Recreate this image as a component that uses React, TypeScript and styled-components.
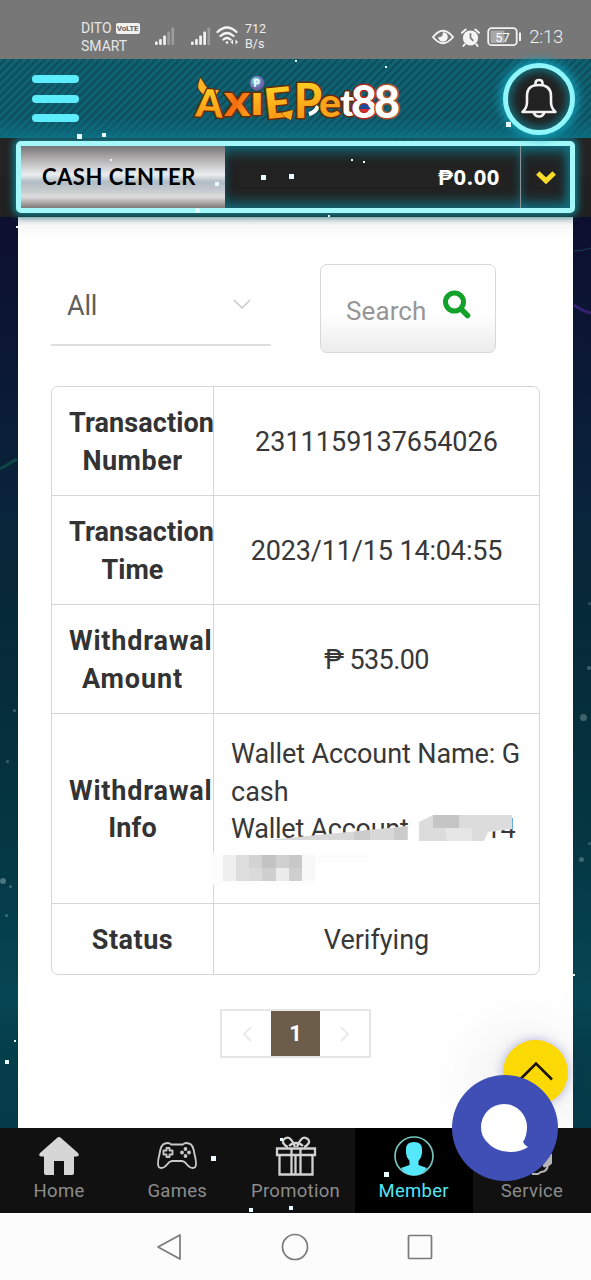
import React from "react";
import styled, { createGlobalStyle } from "styled-components";

const Global = createGlobalStyle`
  * { box-sizing: border-box; }
  body { margin: 0; font-family: Roboto, "Noto Sans", sans-serif; background: #fcfcfc; }
  button { font: inherit; margin: 0; padding: 0; border: 0; background: none; }
  svg { display: block; flex: none; }
`;

const Page = styled.main`
  position: relative;
  width: 591px;
  height: 1280px;
  overflow: hidden;
  display: flex;
  flex-direction: column;
`;

/* status bar */
const StatusBar = styled.div`
  height: 59px;
  flex: none;
  background: #777;
  color: #e6e6e6;
  display: flex;
  align-items: flex-start;
  padding: 19px 28px 0 81px;
`;
const Carriers = styled.div`
  width: 74px;
  font-size: 14px;
  line-height: 18px;
`;
const CarrierLine = styled.div<{ $spacing?: number }>`
  display: flex;
  align-items: center;
  gap: 4px;
  letter-spacing: ${(p) => p.$spacing ?? 0}px;
`;
const Volte = styled.span`
  background: #f2f2f2;
  color: #666;
  font-size: 8px;
  font-weight: 700;
  line-height: 11px;
  width: 24px;
  text-align: center;
  letter-spacing: -0.2px;
  border-radius: 2px;
`;
const StatusLeft = styled.div`
  display: flex;
  gap: 16px;
  padding-top: 8px;
  align-items: flex-start;
`;
const WifiWrap = styled.div`
  margin: -1px 0 0 -11px;
`;
const Speed = styled.div`
  font-size: 12.5px;
  line-height: 15px;
  margin: 2px auto 0 7px;
  color: #eee;
`;
const StatusIcons = styled.div`
  display: flex;
  align-items: center;
  height: 36px;
  gap: 7px;
`;
const Clock = styled.span`
  font-size: 18.5px;
  font-weight: 300;
  color: #f2f2f2;
  letter-spacing: -0.25px;
`;

/* header */
const Header = styled.header`
  height: 79px;
  flex: none;
  display: flex;
  align-items: center;
  justify-content: space-between;
  padding: 0 16px 0 32px;
  background:
    linear-gradient(to bottom, rgba(10, 110, 130, 0) 75%, rgba(10, 115, 135, 0.75) 100%),
    repeating-linear-gradient(135deg, #106171 0 2.6px, #0e4f5e 3.4px 5px, #106171 5.6px);
`;
const MenuButton = styled.button`
  width: 47px;
  display: flex;
  flex-direction: column;
  gap: 11.5px;
`;
const MenuBar = styled.span`
  height: 8px;
  border-radius: 4px;
  background: #5cecfb;
`;
const Brand = styled.div`
  margin-left: 12px;
`;
const Bell = styled.button`
  position: relative;
  z-index: 2;
  width: 72px;
  height: 72px;
  border-radius: 50%;
  border: 5px solid #8ff6fb;
  background: #222;
  box-shadow: 0 0 10px 3px #12a0b8, inset 0 0 8px 3px #14707e;
  display: flex;
  align-items: center;
  justify-content: center;
  padding-bottom: 2px;
`;

/* cash bar */
const CashStrip = styled.section`
  height: 79px;
  flex: none;
  background: linear-gradient(#242424 50%, #202020 50%);
  padding: 3px 16px 4px;
  position: relative;
  z-index: 1;
`;
const CashBox = styled.div`
  height: 72px;
  border: 5px solid #a4f8f9;
  border-radius: 5px;
  background: #222;
  display: flex;
  box-shadow: 0 0 7px 3px #127a8a;
`;
const CashLabel = styled.div`
  width: 204px;
  flex: none;
  display: flex;
  align-items: center;
  padding: 0 0 1px 21px;
  font: 700 22px Lato, sans-serif;
  letter-spacing: 0.5px;
  white-space: nowrap;
  color: #000;
  background: linear-gradient(#767678 0%, #aaa6a7 18%, #cfcfd1 34%, #eaedf1 46%, #b3bdc5 58%, #c2c8cc 70%, #dcdddd 82%, #b5b0b0 90%, #7d7978 100%);
`;
const CashAmount = styled.div`
  flex: 1;
  display: flex;
  align-items: center;
  justify-content: flex-end;
  padding: 0 20px 3px 0;
  color: #fff;
  font: 700 22px "Open Sans", sans-serif;
  letter-spacing: 0.6px;
  box-shadow: inset 0 10px 13px -5px #127080, inset 0 -10px 13px -5px #127080;
`;
const CashToggle = styled.button`
  width: 50px;
  border-left: 1px solid #8c9294;
  display: flex;
  align-items: center;
  justify-content: center;
  box-shadow: inset -6px 0 12px -3px #127080, inset 0 10px 13px -5px #127080, inset 0 -10px 13px -5px #127080;
`;

/* content */
const Backdrop = styled.section`
  height: 911px;
  flex: none;
  padding: 0 18px;
  background: linear-gradient(#0d0f30 0%, #0b1733 14%, #09243a 32%, #052c38 50%, #043844 70%, #064654 86%, #053f4c 90%, #053b48 100%);
`;
const Card = styled.div`
  height: 911px;
  background: linear-gradient(#d2d4d4 0, #f6f6f6 8px, #fff 20px);
  display: flex;
  flex-direction: column;
  padding: 47px 33px 0;
`;
const Filters = styled.div`
  display: flex;
  gap: 49px;
  height: 89px;
`;
const Select = styled.div`
  width: 220px;
  height: 82px;
  border-bottom: 2px solid #dedede;
  display: flex;
  align-items: center;
  justify-content: space-between;
  padding: 3px 20px 0 16px;
  font-size: 27px;
  letter-spacing: -0.2px;
  color: #606060;
  svg { margin-top: -3px; }
`;
const SearchButton = styled.button`
  width: 176px;
  height: 89px;
  border: 1.5px solid #d8d8d8;
  border-radius: 7px;
  background: linear-gradient(#fff 55%, #ececec);
  display: flex;
  align-items: center;
  padding: 4px 0 0 25px;
  gap: 17px;
  font-size: 26px;
  letter-spacing: 0.1px;
  color: #969696;
  svg { margin-top: -12px; }
`;
const Table = styled.dl`
  margin: 33px 0 0;
  width: 489px;
  border: 1px solid #d6d6d6;
  border-radius: 7px;
`;
const Row = styled.div<{ $h: number }>`
  display: flex;
  height: ${(p) => p.$h}px;
  & + & { border-top: 1px solid #d6d6d6; }
`;
const Term = styled.dt`
  width: 162px;
  flex: none;
  border-right: 1px solid #d6d6d6;
  display: flex;
  flex-direction: column;
  align-items: center;
  justify-content: center;
  padding: 3px 17px 0;
  font-size: 27px;
  font-weight: 700;
  line-height: 37.5px;
  color: #333;
`;
const Line = styled.span<{ $ls?: number; $wide?: boolean }>`
  white-space: nowrap;
  letter-spacing: ${(p) => p.$ls ?? 0}px;
  align-self: ${(p) => (p.$wide ? "flex-start" : "auto")};
`;
const Value = styled.dd<{ $info?: boolean }>`
  position: relative;
  margin: 0;
  flex: 1;
  display: flex;
  flex-direction: column;
  justify-content: ${(p) => (p.$info ? "flex-start" : "center")};
  align-items: ${(p) => (p.$info ? "flex-start" : "center")};
  padding: ${(p) => (p.$info ? "22px 0 0 17px" : "3px 0 0")};
  font-size: 27px;
  line-height: 37.5px;
  color: #383838;
`;
const Tail = styled.span`
  margin-left: 77px;
`;
const Redaction = styled.svg`
  position: absolute;
  left: -14px;
  top: 91px;
`;
const Pager = styled.nav`
  margin: 34px auto 0;
  width: 151px;
  height: 49px;
  border: 2px solid #e6e6e6;
  display: flex;
`;
const PageButton = styled.button<{ $current?: boolean }>`
  width: 49px;
  display: flex;
  align-items: center;
  justify-content: center;
  font-weight: 700;
  font-size: 22px;
  color: #fff;
  background: ${(p) => (p.$current ? "#6b5d49" : "transparent")};
`;

/* floating buttons */
const TopButton = styled.button`
  position: absolute;
  left: 503px;
  top: 1040px;
  width: 65px;
  height: 65px;
  border-radius: 50%;
  background: #fbd905;
  box-shadow: 0 0 9px 2px rgba(110, 110, 190, 0.35), -10px 10px 70px 10px rgba(0, 0, 0, 0.1);
  display: flex;
  justify-content: center;
  padding: 21px 0 0 1px;
`;
const ChatButton = styled.button`
  position: absolute;
  z-index: 3;
  left: 452px;
  top: 1075px;
  width: 106px;
  height: 106px;
  border-radius: 50%;
  background: #3f4fb5;
`;

/* bottom navigation */
const TabBar = styled.nav`
  position: relative;
  z-index: 1;
  height: 85px;
  flex: none;
  display: flex;
  background: #111;
`;
const Tab = styled.a<{ $active?: boolean }>`
  flex: 1;
  display: flex;
  flex-direction: column;
  align-items: center;
  padding-top: 7px;
  gap: 2px;
  font-size: 18.5px;
  letter-spacing: 0.3px;
  line-height: 24px;
  color: ${(p) => (p.$active ? "#54e6f5" : "#8c8c8c")};
  background: ${(p) => (p.$active ? "#000" : "transparent")};
`;
const SystemBar = styled.div`
  height: 67px;
  flex: none;
  background: #fcfcfc;
  display: flex;
  justify-content: center;
  align-items: center;
  gap: 98px;
  padding-right: 4px;
`;

const Sparkle = styled.i<{ $x: number; $y: number; $s: number; $o?: number }>`
  position: absolute;
  z-index: 2;
  left: ${(p) => p.$x}px;
  top: ${(p) => p.$y}px;
  width: ${(p) => p.$s}px;
  height: ${(p) => p.$s}px;
  background: #e8fcff;
  opacity: ${(p) => p.$o ?? 1};
  border-radius: ${(p) => (p.$o ? "50%" : "0")};
`;
const Streaks = styled.svg`
  position: absolute;
  left: 0;
  top: 217px;
  pointer-events: none;
`;

const Signal = ({ bars }: { bars: number }) => (
  <svg width="20" height="19" viewBox="0 0 20 19">
    {[0, 1, 2, 3, 4].map((i) => (
      <rect key={i} x={i * 4.1} y={[14.5, 12, 8.5, 4.5, 0.5][i]} width="2.7" height={[3.5, 6, 9.5, 13.5, 17.5][i]} rx="1" fill="#f2f2f2" opacity={i < bars ? 1 : 0.3} />
    ))}
  </svg>
);

const Logo = () => (
  <svg width="212" height="60" viewBox="190 68 212 60">
    <defs>
      <linearGradient id="gold" x1="0" y1="0" x2="0" y2="1">
        <stop offset="0" stopColor="#ffe22b" />
        <stop offset=".6" stopColor="#fba91a" />
        <stop offset="1" stopColor="#f58a12" />
      </linearGradient>
      <linearGradient id="fire" x1="0" y1="0" x2="1" y2="1">
        <stop offset="0" stopColor="#ffae20" />
        <stop offset=".5" stopColor="#f66c12" />
        <stop offset="1" stopColor="#ffb420" />
      </linearGradient>
      <radialGradient id="orb" cx=".4" cy=".35">
        <stop offset="0" stopColor="#c3f5f5" />
        <stop offset=".6" stopColor="#61a8cc" />
        <stop offset="1" stopColor="#7462a8" />
      </radialGradient>
    </defs>
    <g fontFamily="Lato, sans-serif" fontWeight="900" stroke="#642c0b" strokeWidth="3" paintOrder="stroke" strokeLinejoin="round">
      <path d="M203 94 C194 86 198 84 199 77 C204 82 203 85 209 89 L218 89 L214 96 Z" fill="#ffb524" strokeWidth="1.5" />
      <text x="195" y="116" fontSize="38" fill="url(#gold)" textLength="27" lengthAdjust="spacingAndGlyphs" transform="rotate(3 208 103)">A</text>
      <text x="223" y="115" fontSize="44" fill="url(#fire)" textLength="26" lengthAdjust="spacingAndGlyphs">x</text>
      <text x="249" y="114" fontSize="42" fill="url(#gold)" textLength="14" lengthAdjust="spacingAndGlyphs">ı</text>
      <text x="263" y="117" fontSize="42" fill="url(#gold)" textLength="28" lengthAdjust="spacingAndGlyphs" transform="rotate(-6 276 103)">E</text>
      <path d="M280 112 L292 109 L290 119 L284 116 Z" fill="#f9a81a" strokeWidth="1" />
      <text x="293" y="117" fontSize="48" fill="url(#gold)" textLength="28" lengthAdjust="spacingAndGlyphs">P</text>
      <path d="M308 113 Q315 111 317 105" fill="none" stroke="#fff" strokeWidth="4" />
      <text x="318" y="116" fontSize="39" fill="#fba31b" textLength="22" lengthAdjust="spacingAndGlyphs">e</text>
      <text x="339" y="115" fontSize="36" fill="#fff" textLength="15" lengthAdjust="spacingAndGlyphs">t</text>
      <g fill="#fff" stroke="#a8271d">
        <text x="350" y="117" fontSize="46" textLength="26" lengthAdjust="spacingAndGlyphs">8</text>
        <text x="373" y="117" fontSize="46" textLength="26" lengthAdjust="spacingAndGlyphs" stroke="#b2502b">8</text>
      </g>
    </g>
    <path d="M358 108 a5 5 0 0 1 8 -4 l4 4z" fill="#1b4a9a" />
    <path d="M358 108 h11 l-5 4z" fill="#dc2b2b" />
    <circle cx="256" cy="82" r="7" fill="url(#orb)" stroke="#695f9c" strokeWidth="1" />
    <text x="252.5" y="86" fontSize="10" fontWeight="700" fontFamily="Roboto, sans-serif" fill="#fff">P</text>
  </svg>
);

type TermLine = { text: string; ls?: number; wide?: boolean };
const rows: { term: TermLine[]; value?: [string, number]; h: number }[] = [
  { term: [{ text: "Transaction", ls: 0.1, wide: true }, { text: "Number", ls: 0.5 }], value: ["2311159137654026", 0], h: 108 },
  { term: [{ text: "Transaction", ls: 0.1, wide: true }, { text: "Time" }], value: ["2023/11/15 14:04:55", -0.15], h: 109 },
  { term: [{ text: "Withdrawal", ls: 0.8, wide: true }, { text: "Amount", ls: 0.9 }], value: ["₱ 535.00", -0.6], h: 109 },
  { term: [{ text: "Withdrawal", ls: 0.8, wide: true }, { text: "Info", ls: 0.2 }], h: 190 },
  { term: [{ text: "Status", ls: 0.5 }], value: ["Verifying", 0], h: 71 },
];

const mosaic: [number, number, number, number, string][] = [
  [23, 50, 13, 26, "#efefef"], [36, 50, 13, 26, "#dedede"], [49, 50, 13, 13, "#d3d3d3"], [49, 63, 13, 13, "#dadada"],
  [62, 50, 14, 13, "#c3c3c3"], [62, 63, 14, 13, "#cfcfcf"], [76, 50, 13, 13, "#d0d0d0"], [76, 63, 13, 13, "#ececec"],
  [89, 50, 13, 13, "#c8c8c8"], [89, 63, 13, 13, "#cfcfcf"], [102, 50, 13, 26, "#f8f8f8"],
];

const sparkles: [number, number, number, number?][] = [
  [77, 134, 5], [102, 133, 4], [506, 122, 5], [261, 175, 5], [289, 174, 5], [215, 182, 4], [110, 159, 2],
  [195, 208, 5, 0.95], [351, 159, 2], [363, 161, 2], [295, 60, 2], [385, 66, 2], [328, 215, 2], [16, 226, 2],
  [211, 1156, 5], [280, 1138, 3], [249, 1208, 4], [289, 1206, 4], [384, 1172, 5],
  [5, 1060, 4], [14, 1040, 2], [573, 974, 2],
  [13, 709, 3, 0.25], [6, 760, 3, 0.25], [0, 878, 6, 0.3], [9, 885, 3, 0.25], [5, 914, 3, 0.25],
  [580, 714, 7, 0.25], [587, 666, 4, 0.25], [579, 857, 5, 0.25], [588, 842, 3, 0.2], [588, 602, 3, 0.2],
];

export default function App() {
  return (
    <Page>
      <Global />
      <StatusBar>
        <Carriers>
          <CarrierLine $spacing={0}>DITO <Volte>VoLTE</Volte></CarrierLine>
          <CarrierLine $spacing={0}>SMART</CarrierLine>
        </Carriers>
        <StatusLeft>
          <Signal bars={3} />
          <Signal bars={4} />
          <WifiWrap>
            <svg width="22" height="19" viewBox="0 0 22 19" fill="none" stroke="#f4f4f4" strokeWidth="2.3" strokeLinecap="round">
              <path d="M1.5 6 Q11 -3 20.500 6M4.500 10 Q11 4 17.500 10M7.500 13.500 Q11 10.500 14.500 13.500" />
              <circle cx="11" cy="16.500" r="1.300" fill="#f4f4f4" stroke="none" />
              <path d="M14.500 16 l2.500 -2.500v5zM22 16l-2.500 -2.500v5z" fill="#f4f4f4" stroke="none" />
            </svg>
          </WifiWrap>
        </StatusLeft>
        <Speed>712<br />B/s</Speed>
        <StatusIcons>
          <svg width="22" height="16" viewBox="0 0 23 16">
            <path d="M1 8 Q11.500 -5 22 8 Q11.500 21 1 8Z" fill="none" stroke="#f4f4f4" strokeWidth="2" />
            <path d="M11.500 3a5 5 0 1 1 -5 5q3 .5 4 -1t1 -4" fill="#f4f4f4" />
          </svg>
          <svg width="19" height="19" viewBox="0 0 20 20">
            <circle cx="10" cy="10.500" r="8" fill="#f4f4f4" />
            <path d="M1 5 5 1.500M19 5 15 1.500M4 17l-1.500 2M16 17l1.500 2" stroke="#f4f4f4" strokeWidth="2" strokeLinecap="round" />
            <path d="M10 5.500v5l3 3" fill="none" stroke="#777" strokeWidth="1.800" />
          </svg>
          <svg width="35" height="20" viewBox="0 0 35 20">
            <rect x="1.200" y="1.200" width="28.500" height="17" rx="3.500" fill="none" stroke="#f2f2f2" strokeWidth="1.800" />
            <rect x="3.500" y="3.500" width="14" height="12.500" rx="1" fill="#a8a8a8" />
            <rect x="32" y="5.500" width="2" height="8.500" fill="#f2f2f2" />
            <text x="15.500" y="14.500" textAnchor="middle" fontSize="13" fontFamily="Roboto, sans-serif" fill="#fff">57</text>
          </svg>
          <Clock>2:13</Clock>
        </StatusIcons>
      </StatusBar>

      <Header>
        <MenuButton aria-label="Menu"><MenuBar /><MenuBar /><MenuBar /></MenuButton>
        <Brand><Logo /></Brand>
        <Bell aria-label="Notifications">
          <svg width="38" height="42" viewBox="0 0 38 42" fill="none" stroke="#f2f2f2" strokeWidth="2.600" strokeLinejoin="round">
            <path d="M2.500 35 Q7 31 7 25 V19 Q7 8 19 8 Q31 8 31 19 V25 Q31 31 35.500 35Z" />
            <path d="M15.500 8 V6 Q15.500 3 19 3 Q22.500 3 22.500 6 V8M13.500 35 Q15 39.500 19 39.500 Q23 39.500 24.500 35" />
          </svg>
        </Bell>
      </Header>

      <CashStrip>
        <CashBox>
          <CashLabel>CASH CENTER</CashLabel>
          <CashAmount>₱0.00</CashAmount>
          <CashToggle aria-label="Expand">
            <svg width="20" height="15" viewBox="0 0 20 15" fill="none" stroke="#f8dc28" strokeWidth="5">
              <path d="M1.800 3 10 10.800 18.200 3" />
            </svg>
          </CashToggle>
        </CashBox>
      </CashStrip>

      <Backdrop>
        <Card>
          <Filters>
            <Select>
              All
              <svg width="18" height="10" viewBox="0 0 18 10" fill="none" stroke="#c9c9c9" strokeWidth="1.500"><path d="M1 1 9 9 17 1" /></svg>
            </Select>
            <SearchButton>
              Search
              <svg width="28" height="29" viewBox="0 0 28 29" fill="none" stroke="#12a22a" strokeLinecap="round">
                <circle cx="11.500" cy="12" r="9" strokeWidth="5" />
                <path d="M18.500 19.500 24.500 25.500" strokeWidth="5.500" />
              </svg>
            </SearchButton>
          </Filters>
          <Table>
            {rows.map((r, i) => (
              <Row key={i} $h={r.h}>
                <Term>{r.term.map((t) => <Line key={t.text} $ls={t.ls} $wide={t.wide}>{t.text}</Line>)}</Term>
                {r.value ? (
                  <Value><Line $ls={r.value[1]}>{r.value[0]}</Line></Value>
                ) : (
                  <Value $info>
                    <Line $ls={-0.1}>Wallet Account Name: G</Line>
                    <Line>cash</Line>
                    <Line $ls={-0.25}>Wallet Account<Tail>14</Tail></Line>
                    <Redaction width="328" height="85" viewBox="0 0 328 85">
                      <path d="M58 37 L90 34 L208 22 L219 16 L232 10 H312 V24 L288 27 L284 37 L284 45 H58Z" fill="#fff" />
                      <path d="M68 35 L208 21 V35Z" fill="#d8d8d8" />
                      <path d="M154 27 L170 25 V35 H154ZM194 23 L207 21 V35 H194Z" fill="#cbcbcb" />
                      <path d="M219 17 L233 10 H312 V24 L288 27 L284 36 H219Z" fill="#dcdcdc" />
                      <rect x="233" y="10" width="26" height="13" fill="#c5c5c5" />
                      <rect x="246" y="23" width="26" height="13" fill="#e6e6e6" />
                      <path d="M10 48 H168 V58 H115 V80 H10Z" fill="#fdfdfd" />
                      {mosaic.map(([x, y, w, h, fill], k) => <rect key={k} x={x} y={y} width={w} height={h} fill={fill} />)}
                    </Redaction>
                  </Value>
                )}
              </Row>
            ))}
          </Table>
          <Pager>
            <PageButton><svg width="10" height="16" viewBox="0 0 10 16" fill="none" stroke="#e9e9e9" strokeWidth="1.800"><path d="M9 1 2 8 9 15" /></svg></PageButton>
            <PageButton $current>1</PageButton>
            <PageButton><svg width="10" height="16" viewBox="0 0 10 16" fill="none" stroke="#e9e9e9" strokeWidth="1.800"><path d="M1 1 8 8 1 15" /></svg></PageButton>
          </Pager>
        </Card>
      </Backdrop>

      <TabBar>
        <Tab>
          <svg width="42" height="42" viewBox="0 0 42 42" fill="#d6d6d6"><path d="M21 2 Q22 2 23 3 L40 18 Q42 21 39 21.500 H36 V38 Q36 40 34 40 H26 V26 H16 V40 H8 Q6 40 6 38 V21.500 H3 Q0 21 2 18 L19 3 Q20 2 21 2Z" /></svg>
          Home
        </Tab>
        <Tab>
          <svg width="42" height="42" viewBox="0 0 42 42" fill="none" stroke="#c8c8c8" strokeWidth="1.900" strokeLinejoin="round">
            <path d="M9 8.500 Q13 7 15 9.500 H27 Q29 7 33 8.500 Q37 9 38.500 19 Q41.500 31 38.500 32.500 Q35 34.500 30.500 29 Q29 26.500 26 26 H16 Q13 26.500 11.500 29 Q7 34.500 3.500 32.500 Q.5 31 3.500 19 Q5 9 9 8.500Z" />
            <path d="M10.500 13h3v2.500H16.500v4h-3V22h-3v-2.500H7.500v-4h3Z" />
            <g fill="#c8c8c8" stroke="none"><circle cx="29.500" cy="14" r="1.900" /><circle cx="29.500" cy="21" r="1.900" /><circle cx="26" cy="17.500" r="1.900" /><circle cx="33" cy="17.500" r="1.900" /></g>
          </svg>
          Games
        </Tab>
        <Tab>
          <svg width="42" height="42" viewBox="0 0 42 42" fill="none" stroke="#d2d2d2" strokeWidth="2.300">
            <path d="M2 13.500H16.500V20H2ZM16.500 13.500H25.500V20H16.500ZM25.500 13.500H40V20H25.500ZM4.500 20H16.500V39.500H4.500ZM25.500 20H37.500V39.500H25.500ZM16.500 39.500H25.500M20.500 20V39" />
            <path d="M20 12 Q16 1 11 3 Q6 5.500 9 9 Q11 12 13 12M22 12 Q26 1 31 3 Q36 5.500 33 9 Q31 12 29 12M14 11 Q17 8 21 8 Q25 8 28 11" />
          </svg>
          Promotion
        </Tab>
        <Tab $active>
          <svg width="42" height="42" viewBox="0 0 42 42">
            <circle cx="21" cy="21" r="19" fill="none" stroke="#78c4bd" strokeWidth="1.700" />
            <path d="M21 7 Q29 7 29 14 V18 Q29 22 25.500 26 V30 L34 33 Q29 40.500 21 40.500 Q13 40.500 8 33 L16.500 30 V26 Q13 22 13 18 V14 Q13 7 21 7Z" fill="#54e8fa" />
          </svg>
          Member
        </Tab>
        <Tab>
          <svg width="42" height="42" viewBox="0 0 42 42" fill="none" stroke="#b5b5b5" strokeWidth="2">
            <path d="M5 22 Q5 4 21 4 Q37 4 37 22M33 20 H40 V28 Q38 31 33 31ZM37 30 Q36 37 30 37 L27 39 H21" fill="none" />
            <path d="M34 21H39V28L34 31Z" fill="#b5b5b5" />
          </svg>
          Service
        </Tab>
      </TabBar>

      <SystemBar>
        <svg width="28" height="30" viewBox="0 0 28 30" fill="none" stroke="#7a7a7a" strokeWidth="1.700" strokeLinejoin="round"><path d="M25 3V27L3 15Z" /></svg>
        <svg width="28" height="28" viewBox="0 0 28 28" fill="none" stroke="#7a7a7a" strokeWidth="1.700"><circle cx="14" cy="14" r="12.500" /></svg>
        <svg width="26" height="26" viewBox="0 0 26 26" fill="none" stroke="#7a7a7a" strokeWidth="1.700"><rect x="1.500" y="1.500" width="23" height="23" rx="1" /></svg>
      </SystemBar>

      <TopButton aria-label="Back to top">
        <svg width="34" height="20" viewBox="0 0 34 20" fill="none" stroke="#1c1400" strokeWidth="2.600"><path d="M1 18.500 17 2.500 33 18.500" /></svg>
      </TopButton>
      <ChatButton aria-label="Chat">
        <svg width="106" height="106" viewBox="0 0 106 106"><path d="M52 29 A23 23 0 0 1 75 52 Q75 61 71 67 Q73 71 76 72 Q69 77 58 77 Q43 77 34 66 Q29 60 29 52 A23 23 0 0 1 52 29Z" fill="#fff" /></svg>
      </ChatButton>
      <Streaks width="591" height="911" viewBox="0 0 591 911" fill="none">
        <path d="M0 252 L17 242" stroke="#12604f" strokeWidth="3" opacity=".6" />
        <path d="M574 88 Q582 94 591 96" stroke="#46278c" strokeWidth="3" opacity=".7" />
        <path d="M574 34 Q582 34 591 31" stroke="#245064" strokeWidth="1" opacity=".7" />
      </Streaks>
      {sparkles.map(([x, y, s, o], i) => <Sparkle key={i} $x={x} $y={y} $s={s} $o={o} />)}
    </Page>
  );
}
